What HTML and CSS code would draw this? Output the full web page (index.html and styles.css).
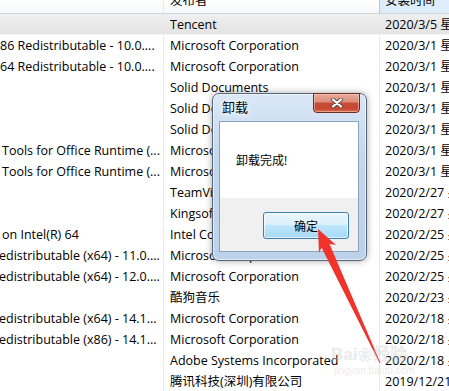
FILE: index.html
```html
<!DOCTYPE html>
<html lang="zh-CN">
<head>
    <meta charset="UTF-8">
    <title>卸载</title>
    <link rel="stylesheet" href="styles.css">
</head>
<body>

<div class="list">
    <div class="head">
        <div class="c1"></div>
        <div class="c2"><span>发布者</span></div>
        <div class="c3"><span>安装时间</span></div>
    </div>
    <div class="row sel"><div class="c1"></div><div class="c2">Tencent</div><div class="c3">2020/3/5 星期四</div></div>
    <div class="row"><div class="c1">86 Redistributable - 10.0....</div><div class="c2">Microsoft Corporation</div><div class="c3">2020/3/1 星期日</div></div>
    <div class="row"><div class="c1">64 Redistributable - 10.0....</div><div class="c2">Microsoft Corporation</div><div class="c3">2020/3/1 星期日</div></div>
    <div class="row"><div class="c1"></div><div class="c2">Solid Documents</div><div class="c3">2020/3/1 星期日</div></div>
    <div class="row"><div class="c1"></div><div class="c2">Solid Documents</div><div class="c3">2020/3/1 星期日</div></div>
    <div class="row"><div class="c1"></div><div class="c2">Solid Documents</div><div class="c3">2020/3/1 星期日</div></div>
    <div class="row"><div class="c1 in">Tools for Office Runtime (...</div><div class="c2">Microsoft Corporation</div><div class="c3">2020/3/1 星期日</div></div>
    <div class="row"><div class="c1 in">Tools for Office Runtime (...</div><div class="c2">Microsoft Corporation</div><div class="c3">2020/3/1 星期日</div></div>
    <div class="row"><div class="c1"></div><div class="c2">TeamViewer</div><div class="c3">2020/2/27 星期四</div></div>
    <div class="row"><div class="c1"></div><div class="c2">Kingsoft Corp.</div><div class="c3">2020/2/27 星期四</div></div>
    <div class="row"><div class="c1 in">on Intel(R) 64</div><div class="c2">Intel Corporation</div><div class="c3">2020/2/25 星期二</div></div>
    <div class="row"><div class="c1 cut">edistributable (x64) - 11.0....</div><div class="c2">Microsoft Corporation</div><div class="c3">2020/2/25 星期二</div></div>
    <div class="row"><div class="c1 cut">edistributable (x64) - 12.0....</div><div class="c2">Microsoft Corporation</div><div class="c3">2020/2/25 星期二</div></div>
    <div class="row"><div class="c1"></div><div class="c2">酷狗音乐</div><div class="c3">2020/2/23 星期日</div></div>
    <div class="row"><div class="c1 cut">edistributable (x64) - 14.1...</div><div class="c2">Microsoft Corporation</div><div class="c3">2020/2/18 星期二</div></div>
    <div class="row"><div class="c1 cut">edistributable (x86) - 14.1...</div><div class="c2">Microsoft Corporation</div><div class="c3">2020/2/18 星期二</div></div>
    <div class="row"><div class="c1"></div><div class="c2">Adobe Systems Incorporated</div><div class="c3">2020/2/18 星期二</div></div>
    <div class="row"><div class="c1"></div><div class="c2">腾讯科技(深圳)有限公司</div><div class="c3">2019/12/21 星期六</div></div>
</div>

<!-- 卸载对话框 -->
<div class="dialog">
    <div class="dlg-title">卸载</div>
    <button class="dlg-close" aria-label="关闭">
        <svg width="14" height="10" viewBox="0 0 14 10">
            <path d="M3 1.5 L11 8.5 M11 1.5 L3 8.5" stroke="#5a4a48" stroke-width="4" stroke-linecap="round"/>
            <path d="M3 1.5 L11 8.5 M11 1.5 L3 8.5" stroke="#fff" stroke-width="2.2" stroke-linecap="round"/>
        </svg>
    </button>
    <div class="dlg-client">
        <div class="dlg-msg">卸载完成!</div>
        <div class="dlg-btns">
            <button class="btn-ok">确定</button>
        </div>
    </div>
</div>

<!-- 红色箭头 -->
<svg class="arrow" width="449" height="391" viewBox="0 0 449 391">
    <polygon points="318,229 336,245 329.5,244 380.5,363 379.5,363 321.5,247.5 319,253" fill="#f0342c"/>
</svg>

<div class="mark">
    <div class="mark-logo">Bai<span class="paw">&#10048;</span>经验</div>
    <div class="mark-url">jingyan.baidu.com</div>
</div>

</body>
</html>
```

FILE: styles.css
```css
body {
    margin: 0;
    width: 449px;
    height: 391px;
    overflow: hidden;
    position: relative;
    background: #fff;
    color: #000;
    font-family: "Open Sans", "Noto Sans CJK SC", sans-serif;
    font-size: 12.5px;
}
.head {
    display: flex;
    height: 13px;
    overflow: hidden;
    border-bottom: 1px solid #d5d5d5;
    background: linear-gradient(#ffffff, #f6f7f9);
    white-space: nowrap;
}
.head span {
    display: block;
    margin-top: -8px;
    line-height: 18px;
}
.head .c3 {
    background: #deedfa;
    border-left-color: #a8cbe8;
}
.row {
    display: flex;
    height: 21px;
    line-height: 22px;
    white-space: nowrap;
}
.row.sel {
    background: linear-gradient(#efefef, #e3e3e3);
    box-shadow: inset 0 -1px 0 #f4f4f4;
}
.c1 {
    flex: none;
    width: 163px;
    overflow: hidden;
}
.c1.in {
    padding-left: 2px;
    box-sizing: border-box;
}
.c1.cut {
    text-indent: -1px;
}
.c2 {
    flex: none;
    width: 216px;
    box-sizing: border-box;
    padding-left: 6px;
    border-left: 1px solid #e3eaf3;
    overflow: hidden;
}
.c3 {
    flex: 1;
    padding-left: 5px;
    border-left: 1px solid #e3eaf3;
    overflow: hidden;
}

/* dialog */
.dialog {
    position: absolute;
    left: 212px;
    top: 93px;
    width: 155px;
    height: 168px;
    box-sizing: border-box;
    border: 1px solid #56667c;
    border-radius: 7px;
    background: linear-gradient(#dae7f6, #c2d7ee 40%, #bcd2eb);
    box-shadow: 0 0 7px rgba(0, 0, 0, 0.35), inset 0 0 0 1px rgba(255, 255, 255, 0.6);
    padding: 0 7px 8px 6px;
    display: flex;
    flex-direction: column;
}
.dlg-title {
    height: 27px;
    line-height: 27px;
    padding-left: 3px;
    font-size: 13px;
    text-shadow: 0 0 6px #fff, 0 0 6px #fff;
}
.dlg-close {
    position: absolute;
    top: -1px;
    right: 6px;
    width: 47px;
    height: 20px;
    padding: 0;
    border: 1px solid #6e2a20;
    border-radius: 0 0 4px 4px;
    background: linear-gradient(#e9a99a, #dc8c7a 45%, #c84c35 50%, #c64631 80%, #d86a4f);
    box-shadow: inset 0 0 0 1px rgba(255, 220, 210, 0.5);
    display: flex;
    align-items: center;
    justify-content: center;
}
.dlg-client {
    flex: 1;
    display: flex;
    flex-direction: column;
    border: 1px solid #8ba0bb;
    background: #f0f0f0;
}
.dlg-msg {
    height: 76px;
    box-sizing: border-box;
    padding: 30px 0 0 16px;
    line-height: 18px;
    font-size: 12px;
    background: #fff;
}
.dlg-btns {
    flex: 1;
    display: flex;
    justify-content: flex-end;
    align-items: flex-start;
    padding: 14px 9px 0 0;
}
.btn-ok {
    width: 86px;
    height: 27px;
    padding: 0;
    border: 1px solid #3c7fb1;
    border-radius: 3px;
    background: linear-gradient(#eaf6fd, #d9f0fc 50%, #bee6fd 50%, #a7d9f5);
    box-shadow: inset 0 0 0 1px rgba(255, 255, 255, 0.7);
    font-family: "Noto Sans CJK SC", sans-serif;
    font-size: 12px;
    color: #000;
}

.arrow {
    position: absolute;
    left: 0;
    top: 0;
    pointer-events: none;
}

/* watermark */
.mark {
    position: absolute;
    left: 331px;
    top: 345px;
    color: rgba(200, 200, 200, 0.4);
    pointer-events: none;
}
.mark-logo {
    font-family: "Liberation Sans", sans-serif;
    font-size: 17px;
    font-weight: bold;
    line-height: 20px;
}
.mark-logo .paw {
    font-size: 14px;
    margin: 0 1px;
}
.mark-url {
    font-family: "Liberation Sans", sans-serif;
    font-size: 10px;
    line-height: 12px;
    margin-left: 3px;
}
```
